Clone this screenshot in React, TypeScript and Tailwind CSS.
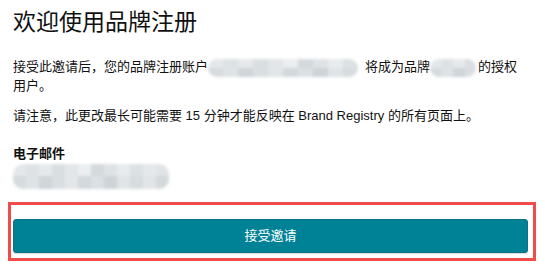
const FONT = "font-['Liberation_Sans','Noto_Sans_CJK_SC',sans-serif]";

// pixelated + blurred placeholder for redacted values
const ROW_A = ["#e4e8ea", "#dde2e5", "#e6e9eb", "#d9dee1", "#e2e6e8", "#eceef0", "#d3d9dc", "#dfe3e6", "#e8ebed", "#dce1e4", "#e5e8ea", "#e0e4e7"];
const ROW_B = ["#d6dbde", "#dfe3e5", "#cfd5d9", "#d9dee1", "#e3e6e8", "#d2d8db", "#dbe0e2", "#cdd3d7", "#e0e4e6", "#d7dcdf", "#e2e5e7", "#d4d9dc"];

function Mosaic({ cols, className }: { cols: number; className: string }) {
  return (
    <span className={`inline-flex flex-col overflow-hidden rounded-[10px] blur-[1.5px] align-middle ${className}`}>
      <span className="flex flex-1">
        {ROW_A.slice(0, cols).map((c, i) => (
          <span key={i} className="flex-1" style={{ background: c }} />
        ))}
      </span>
      <span className="flex flex-1">
        {ROW_B.slice(0, cols).map((c, i) => (
          <span key={i} className="flex-1" style={{ background: c }} />
        ))}
      </span>
    </span>
  );
}

export default function App() {
  return (
    <div className={`w-[545px] h-[265px] bg-white text-[#111111] ${FONT} overflow-hidden`}>
      <div className="pl-[13px] pr-[20px] pt-[8px]">
        <h1 className="text-[23px] leading-[28px] font-normal">欢迎使用品牌注册</h1>

        <p className="mt-[22px] w-[512px] text-[13px] leading-[18px]">
          <span>接受此邀请后，您的品牌注册账户</span>
          <Mosaic cols={10} className="w-[150px] h-[18px] mr-[7px]" />
          <span>将成为品牌</span>
          <Mosaic cols={4} className="w-[46px] h-[18px] mr-[2px]" />
          <span>的授权</span>
          <br />
          <span>用户。</span>
        </p>

        <p className="mt-[12px] text-[13px] leading-[18px]">
          请注意，此更改最长可能需要 15 分钟才能反映在 Brand Registry 的所有页面上。
        </p>

        <div className="mt-[20px] text-[13px] leading-[18px] font-bold">电子邮件</div>
        <Mosaic cols={12} className="mt-[1px] w-[156px] h-[25px] flex" />
      </div>

      {/* highlighted action */}
      <div className="mt-[13px] ml-[8px] w-[528px] border-[3px] border-[#f24b4b] pt-[14px] pb-[5px] pl-[2px] pr-[5px]">
        <button className="w-full h-[34px] rounded-[3px] bg-[#008296] border border-[#0a7384] shadow-[0_1px_1px_rgba(0,0,0,0.15)] text-white text-[13px] leading-[18px]">
          接受邀请
        </button>
      </div>
    </div>
  );
}
